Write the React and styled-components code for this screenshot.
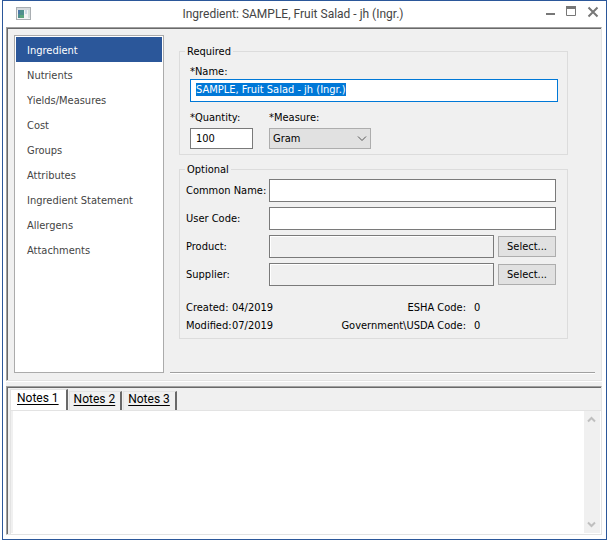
import React, { useEffect, useRef, useState } from "react";
import styled, { createGlobalStyle } from "styled-components";

const GlobalStyle = createGlobalStyle`
  * {
    box-sizing: border-box;
  }

  body {
    margin: 0;
    background: #fff;
    color: #000;
    font: 11px/14px "DejaVu Sans Condensed", "Noto Sans", sans-serif;
  }

  input, select, button, textarea {
    font: inherit;
    color: inherit;
    border-radius: 0;
  }
`;

const sections = [
  "Ingredient",
  "Nutrients",
  "Yields/Measures",
  "Cost",
  "Groups",
  "Attributes",
  "Ingredient Statement",
  "Allergens",
  "Attachments",
];

const noteTabs = ["Notes 1", "Notes 2", "Notes 3"];

const S = {
  Window: styled.div`
    display: flex;
    flex-direction: column;
    min-height: 100vh;
    margin: 0 1px 0 2px;
    padding: 0 4px 4px 3px;
    border: 1px solid #2b579a;
    background: #fff;
  `,
  TitleBar: styled.header`
    display: grid;
    grid-template-columns: 48px 1fr 80px;
    align-items: center;
    height: 26px;
    padding-left: 10px;
  `,
  Title: styled.h1`
    margin: 0;
    text-align: center;
    font: 12px/16px Roboto, sans-serif;
    color: #444;
  `,
  WindowButtons: styled.div`
    display: flex;
    justify-content: flex-end;
    gap: 7px;
    padding: 0 2px 4px 0;
  `,
  WindowButton: styled.button`
    display: flex;
    padding: 0;
    border: none;
    background: none;
  `,
  Sunken: styled.section`
    border: 1px solid #e3e3e3;
    border-top-color: #a0a0a0;
    border-left-color: #a0a0a0;
    box-shadow: inset 1px 1px #696969;
    background: #f0f0f0;
  `,
  Splitter: styled.div`
    height: 5px;
    border-top: 1px solid #fff;
    background: #f0f0f0;
  `,
  Sidebar: styled.nav`
    width: 150px;
    padding: 1px;
    border: 1px solid #ababab;
    background: #fff;
  `,
  SidebarLink: styled.a`
    display: block;
    padding: 3px 11px 0;
    line-height: 22px;
    text-decoration: none;
    color: ${({ $active }) => ($active ? "#fff" : "#444")};
    background: ${({ $active }) => ($active ? "#2b579a" : "transparent")};
  `,
  Form: styled.form`
    display: flex;
    flex-direction: column;
    gap: 7px;
    flex: 1;
    border-bottom: 1px solid #a0a0a0;
    box-shadow: 0 1px #fff;
    padding: 9px 27px 33px 9px;
  `,
  Group: styled.fieldset`
    min-width: 0;
    margin: 0;
    padding: ${({ $padding }) => $padding};
    border: 1px solid #dcdcdc;
  `,
  Legend: styled.legend`
    margin-left: ${({ $indent }) => $indent}px;
    padding: 1px 2px 0;
  `,
  Label: styled.label`
    display: block;
    white-space: nowrap;
  `,
  Input: styled.input`
    display: block;
    width: 100%;
    min-width: 0;
    height: ${({ $small }) => ($small ? 21 : 23)}px;
    padding: ${({ $small }) => ($small ? "0 5px" : "0 5px 2px")};
    border: 1px solid #7a7a7a;
    background: #fff;
    outline: none;

    &:focus {
      border-color: #0078d7;
    }

    &::selection {
      color: #fff;
      background: #0078d7;
    }

    &:read-only {
      background: #f0f0f0;
      box-shadow: inset 1px 1px #fff;
    }
  `,
  Amounts: styled.div`
    display: grid;
    grid-template-columns: 63px 102px;
    gap: 3px 16px;
    margin-top: 9px;
  `,
  SelectBox: styled.div`
    position: relative;

    svg {
      position: absolute;
      top: 7px;
      right: 4px;
      pointer-events: none;
    }
  `,
  Select: styled.select`
    display: block;
    appearance: none;
    width: 100%;
    height: 21px;
    padding: 0 3px;
    border: 1px solid #adadad;
    background: #e1e1e1;
    outline: none;
  `,
  Row: styled.div`
    display: grid;
    grid-template-columns: 79px 1fr ${({ $button }) => ($button ? "58px" : "")};
    gap: 4px;
    align-items: center;
    margin-bottom: 5px;
  `,
  Button: styled.button`
    height: 21px;
    padding: 0;
    border: 1px solid #adadad;
    background: #e1e1e1;
  `,
  Meta: styled.dl`
    display: grid;
    grid-template-columns: 46px 60px 1fr 90px;
    row-gap: 4px;
    margin: 15px 0 0;

    dt:nth-of-type(even) {
      text-align: right;
    }

    dd {
      margin: 0;
    }

    dd:nth-of-type(even) {
      padding-left: 8px;
    }
  `,
  Tabs: styled.div`
    display: flex;
    align-items: flex-end;
    gap: 1px;
    height: 22px;
    padding-left: 2px;
  `,
  Tab: styled.button`
    height: ${({ $active }) => ($active ? 21 : 19)}px;
    padding: ${({ $active }) => ($active ? "0 7px 4px 6px" : "0 5px 4px 4px")};
    border: 1px solid #e3e3e3;
    border-right: 2px solid #696969;
    border-bottom: none;
    background: ${({ $active }) => ($active ? "#fff" : "#f0f0f0")};
    font: 12px/14px Roboto, sans-serif;
    text-decoration: underline;
    text-underline-offset: 2px;
  `,
  NotesBody: styled.div`
    display: flex;
    flex: 1;
    margin-left: 2px;
    padding: 0 1px 1px 0;
    border-top: 1px solid #e3e3e3;
    border-left: 1px solid #e3e3e3;
    background: #fff;
  `,
  Notes: styled.textarea`
    flex: 1;
    min-width: 0;
    padding: 4px;
    border: none;
    border-left: 2px solid #f0f0f0;
    resize: none;
    outline: none;
    background: #fff;
  `,
  ScrollBar: styled.div`
    display: flex;
    flex-direction: column;
    justify-content: space-between;
    width: 16px;
    background: #f0f0f0;
  `,
  ScrollButton: styled.button`
    display: flex;
    justify-content: center;
    padding: 5px 2px 5px 0;
    border: none;
    background: none;
  `,
};

S.Editor = styled(S.Sunken)`
  display: flex;
  gap: 6px;
  padding: 7px 6px 7px 7px;
`;

S.NotesPanel = styled(S.Sunken)`
  display: flex;
  flex-direction: column;
  flex: 1;
  padding: 1px 0 0 1px;
`;

const AppIcon = () => (
  <svg width="16" height="14" viewBox="0 0 16 14" shapeRendering="crispEdges">
    <rect x="0.5" y="0.5" width="14" height="12" fill="#f4f4f4" stroke="#a9aeb2" />
    <rect x="1" y="1" width="13" height="2" fill="#d5d9dc" />
    <rect x="2" y="3" width="6" height="8" fill="#4f8f8c" />
    <rect x="2" y="3" width="2" height="4" fill="#4a78a8" />
    <rect x="4" y="8" width="4" height="3" fill="#5ba57c" />
    <rect x="9" y="3" width="2" height="4" fill="#cfdbe6" />
    <rect x="12" y="3" width="2" height="8" fill="#d5e0dc" />
  </svg>
);

const Arrow = ({ up }) => (
  <svg width="9" height="7" viewBox="0 0 9 7">
    <path d={up ? "M1 5.5L4.5 2L8 5.5" : "M1 1.5L4.5 5L8 1.5"} fill="none" stroke="#bfbfbf" strokeWidth="2" />
  </svg>
);

const SelectRow = ({ id, label }) => (
  <S.Row $button>
    <S.Label htmlFor={id}>{label}</S.Label>
    <S.Input id={id} readOnly />
    <S.Button type="button">Select...</S.Button>
  </S.Row>
);

const App = () => {
  const [section, setSection] = useState("Ingredient");
  const [tab, setTab] = useState("Notes 1");
  const nameRef = useRef(null);

  useEffect(() => {
    nameRef.current.focus();
    nameRef.current.select();
  }, []);

  return (
    <>
      <GlobalStyle />
      <S.Window>
        <S.TitleBar>
          <AppIcon />
          <S.Title>Ingredient: SAMPLE, Fruit Salad - jh (Ingr.)</S.Title>
          <S.WindowButtons>
            <S.WindowButton aria-label="Minimize">
              <svg width="14" height="12" viewBox="0 0 14 12">
                <path d="M2 8h9" stroke="#777" strokeWidth="2" />
              </svg>
            </S.WindowButton>
            <S.WindowButton aria-label="Maximize">
              <svg width="14" height="12" viewBox="0 0 14 12">
                <path d="M1.5 1v8.5h9V1" fill="none" stroke="#777" />
                <path d="M1 1.5h10" stroke="#777" strokeWidth="3" />
              </svg>
            </S.WindowButton>
            <S.WindowButton aria-label="Close">
              <svg width="14" height="12" viewBox="0 0 14 12">
                <path d="M2.5 1.5l9 9M11.5 1.5l-9 9" stroke="#777" strokeWidth="2" />
              </svg>
            </S.WindowButton>
          </S.WindowButtons>
        </S.TitleBar>

        <S.Editor>
          <S.Sidebar>
            {sections.map((name) => (
              <S.SidebarLink key={name} href="#" $active={name === section} onClick={() => setSection(name)}>
                {name}
              </S.SidebarLink>
            ))}
          </S.Sidebar>

          <S.Form>
            <S.Group $padding="6px 9px 5px 10px">
              <S.Legend $indent={-5}>Required</S.Legend>
              <S.Label htmlFor="name">*Name:</S.Label>
              <S.Input id="name" ref={nameRef} defaultValue="SAMPLE, Fruit Salad - jh (Ingr.)" />
              <S.Amounts>
                <S.Label htmlFor="quantity">*Quantity:</S.Label>
                <S.Label htmlFor="measure">*Measure:</S.Label>
                <S.Input id="quantity" $small defaultValue="100" />
                <S.SelectBox>
                  <S.Select id="measure">
                    <option>Gram</option>
                  </S.Select>
                  <svg width="10" height="7" viewBox="0 0 10 7">
                    <path d="M1 1.5L5 5.5L9 1.5" fill="none" stroke="#555" />
                  </svg>
                </S.SelectBox>
              </S.Amounts>
            </S.Group>

            <S.Group $padding="2px 11px 5px 6px">
              <S.Legend $indent={-1}>Optional</S.Legend>
              <S.Row>
                <S.Label htmlFor="common">Common Name:</S.Label>
                <S.Input id="common" />
              </S.Row>
              <S.Row>
                <S.Label htmlFor="code">User Code:</S.Label>
                <S.Input id="code" />
              </S.Row>
              <SelectRow id="product" label="Product:" />
              <SelectRow id="supplier" label="Supplier:" />
              <S.Meta>
                <dt>Created:</dt>
                <dd>04/2019</dd>
                <dt>ESHA Code:</dt>
                <dd>0</dd>
                <dt>Modified:</dt>
                <dd>07/2019</dd>
                <dt>Government\USDA Code:</dt>
                <dd>0</dd>
              </S.Meta>
            </S.Group>
          </S.Form>
        </S.Editor>

        <S.Splitter />

        <S.NotesPanel>
          <S.Tabs role="tablist">
            {noteTabs.map((name) => (
              <S.Tab key={name} role="tab" aria-selected={name === tab} $active={name === tab} onClick={() => setTab(name)}>
                {name}
              </S.Tab>
            ))}
          </S.Tabs>
          <S.NotesBody>
            <S.Notes aria-label={tab} />
            <S.ScrollBar>
              <S.ScrollButton aria-label="Scroll up">
                <Arrow up />
              </S.ScrollButton>
              <S.ScrollButton aria-label="Scroll down">
                <Arrow />
              </S.ScrollButton>
            </S.ScrollBar>
          </S.NotesBody>
        </S.NotesPanel>
      </S.Window>
    </>
  );
};

export default App;
